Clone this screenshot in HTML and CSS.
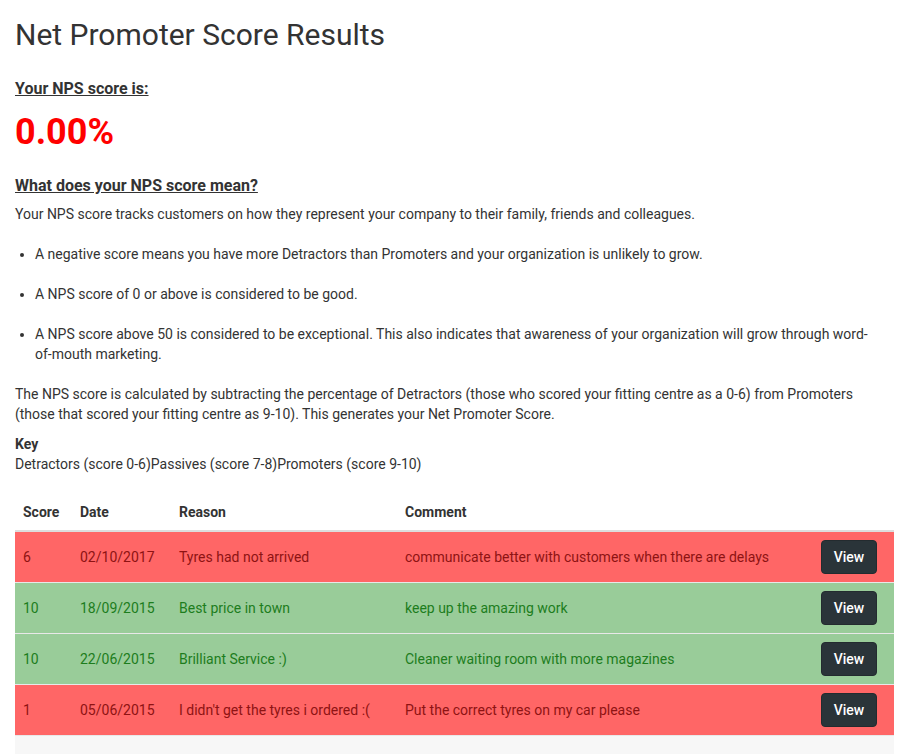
FILE: index.html
```html
<!DOCTYPE html>
<html>
<head>
  <title>Net Promoter Score Results</title>
  <link rel="stylesheet" href="styles.css">
</head>
<body>
  <div class="page">
    <h1 class="title">Net Promoter Score Results</h1>

    <h4 class="label">Your NPS score is:</h4>
    <div class="score">0.00%</div>

    <h4 class="label mean">What does your NPS score mean?</h4>
    <p class="intro">Your NPS score tracks customers on how they represent your company to their family, friends and colleagues.</p>

    <ul class="points">
      <li><p>A negative score means you have more Detractors than Promoters and your organization is unlikely to grow.</p></li>
      <li><p>A NPS score of 0 or above is considered to be good.</p></li>
      <li><p>A NPS score above 50 is considered to be exceptional. This also indicates that awareness of your organization will grow through word-of-mouth marketing.</p></li>
    </ul>

    <p class="calc">The NPS score is calculated by subtracting the percentage of Detractors (those who scored your fitting centre as a 0-6) from Promoters (those that scored your fitting centre as 9-10). This generates your Net Promoter Score.</p>

    <div class="key">
      <strong>Key</strong><br>
      <span>Detractors (score 0-6)</span><span>Passives (score 7-8)</span><span>Promoters (score 9-10)</span>
    </div>

    <table class="results">
      <colgroup>
        <col class="c-score">
        <col class="c-date">
        <col class="c-reason">
        <col class="c-comment">
        <col class="c-action">
      </colgroup>
      <thead>
        <tr>
          <th>Score</th>
          <th>Date</th>
          <th>Reason</th>
          <th>Comment</th>
          <th></th>
        </tr>
      </thead>
      <tbody>
        <tr class="bad">
          <td>6</td>
          <td>02/10/2017</td>
          <td>Tyres had not arrived</td>
          <td>communicate better with customers when there are delays</td>
          <td><button class="view">View</button></td>
        </tr>
        <tr class="good">
          <td>10</td>
          <td>18/09/2015</td>
          <td>Best price in town</td>
          <td>keep up the amazing work</td>
          <td><button class="view">View</button></td>
        </tr>
        <tr class="good">
          <td>10</td>
          <td>22/06/2015</td>
          <td>Brilliant Service :)</td>
          <td>Cleaner waiting room with more magazines</td>
          <td><button class="view">View</button></td>
        </tr>
        <tr class="bad">
          <td>1</td>
          <td>05/06/2015</td>
          <td>I didn't get the tyres i ordered :(</td>
          <td>Put the correct tyres on my car please</td>
          <td><button class="view">View</button></td>
        </tr>
        <tr class="blank">
          <td></td>
          <td></td>
          <td></td>
          <td></td>
          <td></td>
        </tr>
      </tbody>
    </table>
  </div>
</body>
</html>
```

FILE: styles.css
```css
body {
    margin: 0;
    background-color: white;
    font-family: Roboto, "Liberation Sans", sans-serif;
    font-size: 14px;
    line-height: 20px;
    color: #333;
}

.page {
    padding: 0 18px 0 15px;
}

.title {
    margin: 18px 0 0 0;
    font-size: 30px;
    line-height: 33px;
    font-weight: 400;
    color: #333;
}

.label {
    margin: 28px 0 0 0;
    font-size: 16px;
    line-height: 20px;
    font-weight: 700;
    text-decoration: underline;
    color: #333;
}

.score {
    margin-top: 13px;
    font-size: 36px;
    line-height: 40px;
    font-weight: 700;
    color: red;
}

.label.mean {
    margin-top: 24px;
}

.intro {
    margin: 8px 0 0 0;
}

.points {
    margin: 20px 24px 0 0;
    padding-left: 20px;
}

.points p {
    margin: 0 0 20px 0;
}

.calc {
    margin: 0;
}

.key {
    margin-top: 10px;
}

.key strong {
    font-weight: 700;
}

.results {
    margin-top: 20px;
    width: 100%;
    border-collapse: collapse;
    font-size: 14px;
}

.c-score { width: 57px; }
.c-date { width: 99px; }
.c-reason { width: 226px; }
.c-comment { width: 416px; }

.results th {
    text-align: left;
    font-weight: 700;
    padding: 8px;
    border-bottom: 2px solid #ddd;
}

.results td {
    padding: 8px;
    border-top: 1px solid #e8e8e8;
    vertical-align: middle;
}

.bad td {
    background-color: #ff6666;
    color: #8e1313;
}

.good td {
    background-color: #99cc99;
    color: #1d7d1d;
}

.blank td {
    background-color: #f7f7f7;
    height: 34px;
}

.view {
    height: 34px;
    width: 56px;
    border: 1px solid #232b2f;
    border-radius: 4px;
    background-color: #2a3439;
    color: white;
    font-family: Roboto, "Liberation Sans", sans-serif;
    font-size: 14px;
    font-weight: 500;
    cursor: pointer;
}
```
